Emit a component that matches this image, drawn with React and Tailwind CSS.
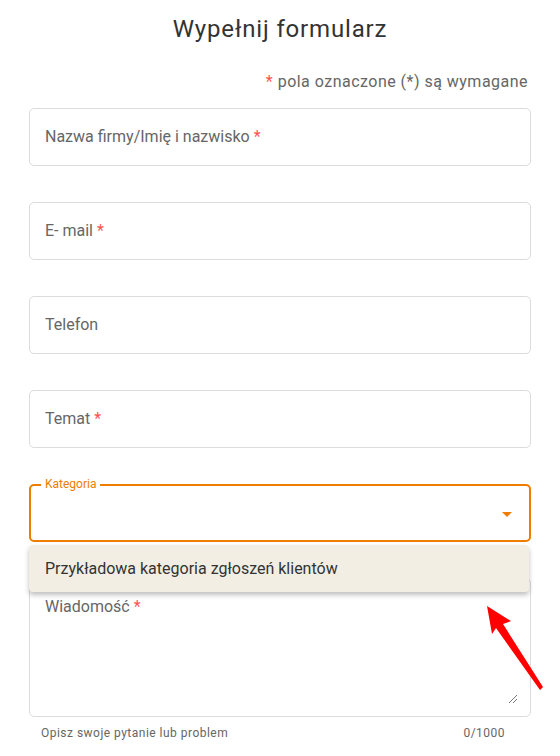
import React from "react";

function Field({ label, required }) {
  return (
    <div className="h-[58px] border border-[#dcdcdc] rounded-[5px] flex items-center px-[15px] text-[16px] leading-[24px] text-[#666]">
      <span>
        {label}
        {required && <span className="text-[#ff5252]"> *</span>}
      </span>
    </div>
  );
}

export default function App() {
  return (
    <div className="relative w-[560px] h-[756px] bg-white font-['Roboto',sans-serif]">
      <h1 className="text-center text-[24px] leading-[32px] text-[#333] pt-[13px] tracking-[0.035em]">
        Wypełnij formularz
      </h1>
      <p className="text-right pr-[32px] mt-[25px] text-[16px] leading-[24px] text-[#666] tracking-[0.03em]">
        <span className="text-[#ff5252]">*</span> pola oznaczone (*) są wymagane
      </p>
      <div className="mx-[29px] mt-[14px] flex flex-col gap-[36px]">
        <Field label="Nazwa firmy/Imię i nazwisko" required />
        <Field label="E- mail" required />
        <Field label="Telefon" />
        <Field label="Temat" required />
        <div className="relative h-[58px] border-2 border-[#ef7d00] rounded-[5px] flex items-center justify-end pr-[17px]">
          <span className="absolute -top-[10px] left-[10px] bg-white px-[4px] text-[12px] leading-[16px] text-[#ef7d00]">
            Kategoria
          </span>
          <svg width="10" height="5" viewBox="0 0 10 5" className="mt-[2px]">
            <path d="M0 0 L10 0 L5 5 Z" fill="#ef7d00" />
          </svg>
        </div>
        <div className="relative h-[139px] border border-[#dcdcdc] rounded-[5px] px-[15px] pt-[16px] text-[16px] leading-[24px] text-[#666]">
          <span>
            Wiadomość<span className="text-[#ff5252]"> *</span>
          </span>
          <svg width="10" height="10" viewBox="0 0 10 10" className="absolute right-[12px] bottom-[12px]">
            <path d="M1 9 L9 1 M5 9 L9 5" stroke="#777" strokeWidth="1" />
          </svg>
        </div>
      </div>
      <div className="mx-[29px] flex justify-between pl-[12px] pr-[26px] mt-[8px] text-[12px] leading-[16px] text-[#666] tracking-[0.04em]">
        <span>Opisz swoje pytanie lub problem</span>
        <span>0/1000</span>
      </div>

      <div className="absolute top-[545px] left-[29px] w-[500px] h-[47px] bg-[#f2eee4] rounded-[4px] shadow-[0_3px_5px_rgba(0,0,0,0.25)] flex items-center px-[16px] text-[16px] text-[#333]">
        Przykładowa kategoria zgłoszeń klientów
      </div>

      <svg
        className="absolute left-0 top-0"
        width="560"
        height="756"
        viewBox="0 0 560 756"
      >
        <polygon
          points="487,606 511,621 503,624 543,687 540,690 496,628 492,634"
          fill="#ff0000"
        />
      </svg>
    </div>
  );
}
